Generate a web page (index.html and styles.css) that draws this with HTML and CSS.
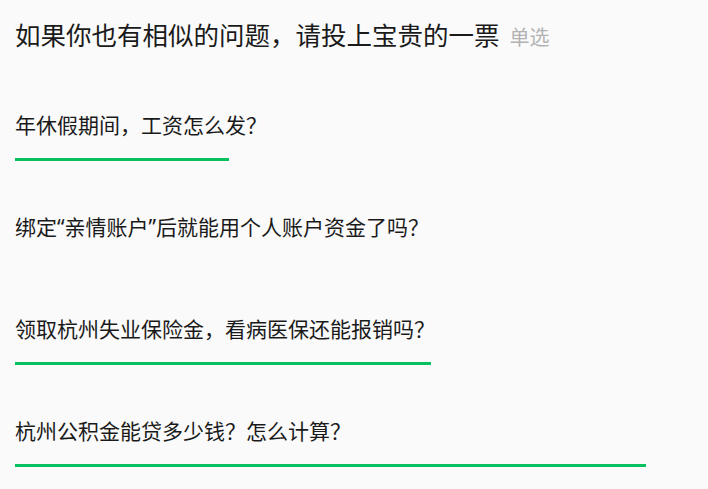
FILE: index.html
```html
<!DOCTYPE html>
<html lang="zh-CN">
<head>
<meta charset="utf-8">
<title>投票</title>
<link rel="stylesheet" href="styles.css">
</head>
<body>
<div class="vote">
  <div class="vote-title">
    <span class="title-text">如果你也有相似的问题，请投上宝贵的一票</span>
    <span class="title-tag">单选</span>
  </div>
  <ul class="options">
    <li class="option">
      <div class="option-text">年休假期间，工资怎么发？</div>
      <div class="bar" style="width:214px"></div>
    </li>
    <li class="option">
      <div class="option-text">绑定“亲情账户”后就能用个人账户资金了吗？</div>
      <div class="bar" style="width:0px"></div>
    </li>
    <li class="option">
      <div class="option-text">领取杭州失业保险金，看病医保还能报销吗？</div>
      <div class="bar" style="width:416px"></div>
    </li>
    <li class="option">
      <div class="option-text">杭州公积金能贷多少钱？怎么计算？</div>
      <div class="bar" style="width:631px"></div>
    </li>
  </ul>
</div>
</body>
</html>
```

FILE: styles.css
```css
html, body {
  margin: 0;
  padding: 0;
  background: #fafafa;
}
body {
  font-family: "Noto Sans", "Noto Sans CJK SC", sans-serif;
  color: #1a1a1a;
}
.vote {
  padding: 17px 15px 0 15px;
}
.vote-title {
  display: flex;
  align-items: baseline;
  gap: 10px;
  line-height: 36px;
}
.title-text {
  font-size: 25.5px;
  color: #1a1a1a;
}
.title-tag {
  font-size: 20px;
  color: #b2b2b2;
}
.options {
  list-style: none;
  margin: 0;
  padding: 0;
  margin-top: 55px;
}
.option {
  height: 102px;
}
.option:last-child {
  height: auto;
}
.option-text {
  font-size: 21px;
  line-height: 28px;
  color: #1a1a1a;
}
.bar {
  margin-top: 19px;
  height: 3px;
  background: #07c160;
}
```
